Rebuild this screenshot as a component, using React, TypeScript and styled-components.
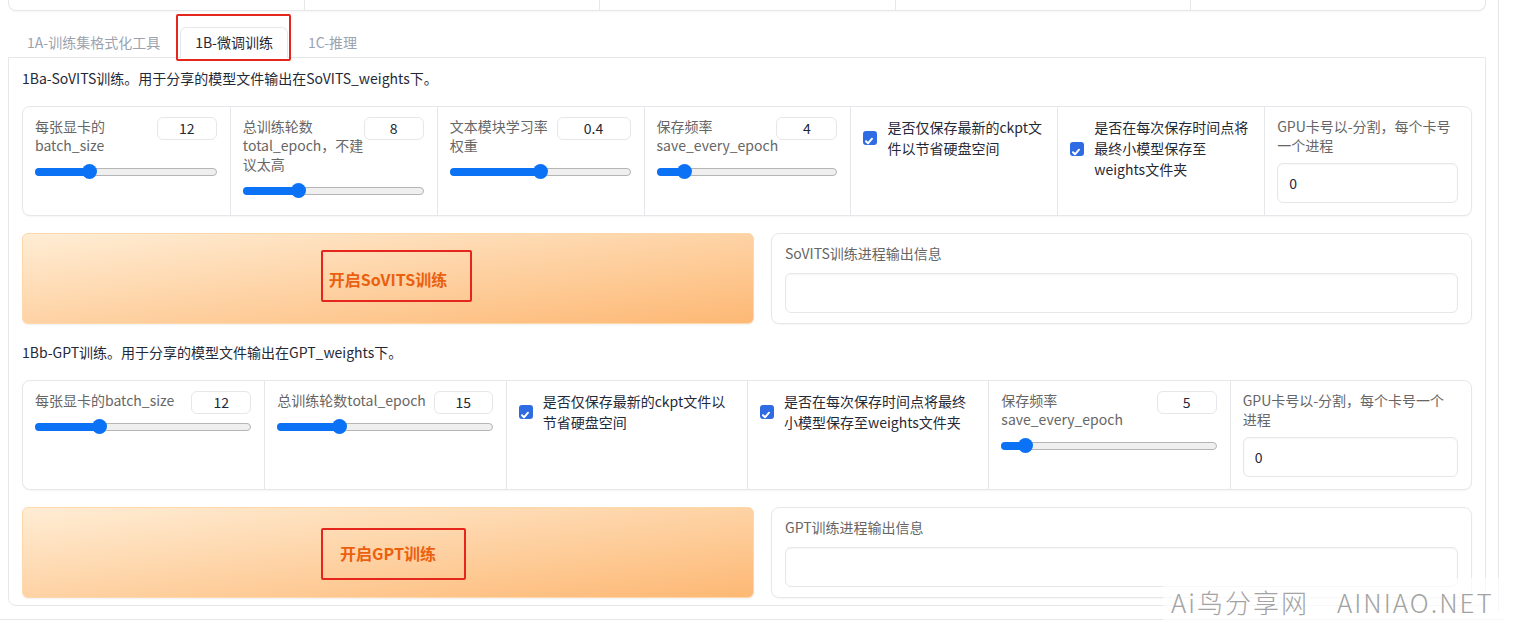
import React from 'react';
import styled, { createGlobalStyle, css } from 'styled-components';

const BORDER = '#e5e7eb';
const BLUE = '#0b72f6';

const GlobalStyle = createGlobalStyle`
  html, body {
    margin: 0;
    padding: 0;
    background: #fff;
  }
  body {
    font-family: "Noto Sans CJK SC", "Noto Sans", sans-serif;
    font-size: 14px;
    color: #1f2937;
  }
  * {
    box-sizing: border-box;
  }
`;

const Page = styled.div`
  position: relative;
  width: 1519px;
  height: 629px;
  overflow: hidden;
`;

const Frame = styled.div`
  width: 1499px;
  height: 611px;
  padding: 0 12px 0 8px;
  border-right: 1px solid ${BORDER};
  display: flex;
  flex-direction: column;
`;

const BottomRule = styled.div`
  width: 1505px;
  height: 1px;
  margin-top: 8px;
  background: ${BORDER};
`;

const TopStrip = styled.div`
  display: grid;
  grid-template-columns: repeat(5, 1fr);
  height: 11px;
  border: 1px solid ${BORDER};
  border-top: none;
  border-radius: 0 0 8px 8px;
  box-shadow: 0 1px 2px rgba(0, 0, 0, 0.04);
  overflow: hidden;
`;

const TopCell = styled.div`
  & + & {
    border-left: 1px solid ${BORDER};
  }
`;

const TabBar = styled.div`
  position: relative;
  z-index: 1;
  display: flex;
  gap: 5px;
  margin-top: 16px;
  padding-left: 4px;
`;

const Tab = styled.button<{ $active?: boolean }>`
  position: relative;
  height: 31px;
  margin-bottom: -1px;
  padding: 0 14px 3px;
  font: inherit;
  font-size: 14px;
  color: #9ca3af;
  background: transparent;
  border: 1px solid transparent;
  border-bottom: none;
  border-radius: 6px 6px 0 0;
  cursor: pointer;

  ${({ $active }) =>
    $active &&
    css`
      color: #1f2937;
      background: #fff;
      border-color: ${BORDER};
    `}
`;

const Annotation = styled.span<{ $t: number; $r: number; $b: number; $l: number }>`
  position: absolute;
  top: ${({ $t }) => $t}px;
  right: ${({ $r }) => $r}px;
  bottom: ${({ $b }) => $b}px;
  left: ${({ $l }) => $l}px;
  border: 2px solid #e4261d;
  border-radius: 2px;
  pointer-events: none;
`;

const Panel = styled.div`
  display: flex;
  flex-direction: column;
  gap: 17px;
  padding: 9px 13px 7px;
  border: 1px solid ${BORDER};
  border-radius: 0 0 8px 8px;
`;

const Description = styled.div`
  line-height: 22px;
  color: #1f2937;
`;

const ParamBlock = styled.div<{ $cols: number }>`
  display: grid;
  grid-template-columns: repeat(${({ $cols }) => $cols}, 1fr);
  border: 1px solid ${BORDER};
  border-radius: 8px;
  background: #fff;
  box-shadow: 0 1px 2px rgba(0, 0, 0, 0.04);
`;

const ParamCell = styled.div`
  min-width: 0;
  padding: 10px 13px 12px 12px;

  & + & {
    border-left: 1px solid ${BORDER};
  }
`;

const SliderHead = styled.div`
  display: flex;
  justify-content: space-between;
  align-items: flex-start;
  gap: 8px;
`;

const FieldLabel = styled.div`
  flex: 1;
  min-width: 0;
  margin-bottom: 8px;
  line-height: 19px;
  color: #666;

  span {
    display: block;
    white-space: nowrap;
  }
`;

const NumberBox = styled.div<{ $w: number }>`
  flex: none;
  width: ${({ $w }) => $w}px;
  height: 23px;
  line-height: 21px;
  text-align: center;
  color: #1f2937;
  border: 1px solid ${BORDER};
  border-radius: 6px;
  background: #fff;
`;

const Track = styled.div`
  position: relative;
  height: 15px;
  margin-top: 1px;
`;

const Rail = styled.div`
  position: absolute;
  left: 0;
  right: 0;
  top: 3.5px;
  height: 8px;
  border: 1px solid #b5b5b5;
  border-radius: 4px;
  background: #efefef;
`;

const Fill = styled.div`
  position: absolute;
  left: 0;
  top: 3.5px;
  height: 8px;
  border-radius: 4px;
  background: ${BLUE};
`;

const Thumb = styled.div`
  position: absolute;
  top: 0;
  width: 15px;
  height: 15px;
  border-radius: 50%;
  background: ${BLUE};
`;

const CheckRow = styled.label`
  display: flex;
  align-items: center;
  gap: 10px;
  line-height: 21px;
  color: #1f2937;

  span {
    display: block;
    white-space: nowrap;
  }
`;

const CheckBox = styled.span`
  flex: none;
  display: flex;
  align-items: center;
  justify-content: center;
  width: 14px;
  height: 14px;
  border-radius: 3px;
  background: #2f6be2;
`;

const TextField = styled.div`
  display: flex;
  align-items: center;
  height: 40px;
  margin-top: 2px;
  padding: 0 11px;
  color: #1f2937;
  border: 1px solid ${BORDER};
  border-radius: 6px;
  box-shadow: inset 0 1px 2px rgba(0, 0, 0, 0.03);
`;

const ActionRow = styled.div`
  display: grid;
  grid-template-columns: 732px 1fr;
  gap: 17px;
`;

const StartButton = styled.button`
  display: flex;
  align-items: center;
  justify-content: center;
  font: inherit;
  font-size: 16px;
  font-weight: 700;
  color: #ea600f;
  border: 1px solid #fed7aa;
  border-radius: 6px;
  background: linear-gradient(to bottom right, #ffedd5, #fdb874);
  box-shadow: 0 1px 2px rgba(0, 0, 0, 0.06);
  cursor: pointer;
`;

const ButtonText = styled.span`
  position: relative;
  line-height: 22px;
`;

const OutputBox = styled.div`
  padding: 9px 13px 10px;
  border: 1px solid ${BORDER};
  border-radius: 8px;
  box-shadow: 0 1px 2px rgba(0, 0, 0, 0.04);
`;

const OutputLabel = styled.div`
  line-height: 20px;
  color: #666;
`;

const OutputArea = styled.div`
  height: 40px;
  margin-top: 10px;
  border: 1px solid ${BORDER};
  border-radius: 6px;
  box-shadow: inset 0 1px 2px rgba(0, 0, 0, 0.04);
`;

const Watermark = styled.div`
  position: absolute;
  right: 0;
  top: 578px;
  width: 356px;
  height: 46px;
  padding-left: 8px;
  display: flex;
  align-items: center;
  gap: 28px;
  font-size: 26px;
  font-weight: 300;
  letter-spacing: 2px;
  color: #a3a3a3;
  background: rgba(255, 255, 255, 0.72);
  pointer-events: none;
`;

type Param =
  | { kind: 'slider'; label: string[]; value: number; min: number; max: number; w: number }
  | { kind: 'check'; label: string[] }
  | { kind: 'text'; label: string[]; value: string };

const Lines = ({ lines }: { lines: string[] }) => (
  <>
    {lines.map((l) => (
      <span key={l}>{l}</span>
    ))}
  </>
);

const Slider = ({ value, min, max }: { value: number; min: number; max: number }) => {
  const p = (value - min) / (max - min);
  return (
    <Track>
      <Rail />
      <Fill style={{ width: `calc(7.5px + (100% - 15px) * ${p})` }} />
      <Thumb style={{ left: `calc((100% - 15px) * ${p})` }} />
    </Track>
  );
};

const Check = () => (
  <CheckBox>
    <svg width="12" height="12" viewBox="0 0 12 12">
      <path
        d="M3 6.3l2 2 4-4.6"
        fill="none"
        stroke="#fff"
        strokeWidth="2"
        strokeLinecap="round"
        strokeLinejoin="round"
      />
    </svg>
  </CheckBox>
);

const ParamCellView = ({ param }: { param: Param }) => {
  if (param.kind === 'slider') {
    return (
      <ParamCell>
        <SliderHead>
          <FieldLabel>
            <Lines lines={param.label} />
          </FieldLabel>
          <NumberBox $w={param.w}>{param.value}</NumberBox>
        </SliderHead>
        <Slider value={param.value} min={param.min} max={param.max} />
      </ParamCell>
    );
  }
  if (param.kind === 'check') {
    return (
      <ParamCell>
        <CheckRow>
          <Check />
          <div>
            <Lines lines={param.label} />
          </div>
        </CheckRow>
      </ParamCell>
    );
  }
  return (
    <ParamCell>
      <FieldLabel>
        <Lines lines={param.label} />
      </FieldLabel>
      <TextField>{param.value}</TextField>
    </ParamCell>
  );
};

const sovitsParams: Param[] = [
  { kind: 'slider', label: ['每张显卡的', 'batch_size'], value: 12, min: 1, max: 40, w: 60 },
  { kind: 'slider', label: ['总训练轮数', 'total_epoch，不建', '议太高'], value: 8, min: 1, max: 25, w: 60 },
  { kind: 'slider', label: ['文本模块学习率', '权重'], value: 0.4, min: 0.2, max: 0.6, w: 74 },
  { kind: 'slider', label: ['保存频率', 'save_every_epoch'], value: 4, min: 1, max: 25, w: 61 },
  { kind: 'check', label: ['是否仅保存最新的ckpt文', '件以节省硬盘空间'] },
  { kind: 'check', label: ['是否在每次保存时间点将', '最终小模型保存至', 'weights文件夹'] },
  { kind: 'text', label: ['GPU卡号以-分割，每个卡号', '一个进程'], value: '0' },
];

const gptParams: Param[] = [
  { kind: 'slider', label: ['每张显卡的batch_size'], value: 12, min: 1, max: 40, w: 60 },
  { kind: 'slider', label: ['总训练轮数total_epoch'], value: 15, min: 2, max: 50, w: 59 },
  { kind: 'check', label: ['是否仅保存最新的ckpt文件以', '节省硬盘空间'] },
  { kind: 'check', label: ['是否在每次保存时间点将最终', '小模型保存至weights文件夹'] },
  { kind: 'slider', label: ['保存频率', 'save_every_epoch'], value: 5, min: 1, max: 50, w: 60 },
  { kind: 'text', label: ['GPU卡号以-分割，每个卡号一个', '进程'], value: '0' },
];

const App: React.FC = () => (
  <Page>
    <GlobalStyle />
    <Frame>
      <TopStrip>
        {[0, 1, 2, 3, 4].map((i) => (
          <TopCell key={i} />
        ))}
      </TopStrip>

      <TabBar>
        <Tab>1A-训练集格式化工具</Tab>
        <Tab $active>
          1B-微调训练
          <Annotation $t={-14} $r={-4} $b={-3} $l={-5} />
        </Tab>
        <Tab>1C-推理</Tab>
      </TabBar>

      <Panel>
        <Description>1Ba-SoVITS训练。用于分享的模型文件输出在SoVITS_weights下。</Description>
        <ParamBlock $cols={7}>
          {sovitsParams.map((p, i) => (
            <ParamCellView key={i} param={p} />
          ))}
        </ParamBlock>
        <ActionRow>
          <StartButton>
            <ButtonText>
              开启SoVITS训练
              <Annotation $t={-18} $r={-25} $b={-12} $l={-8} />
            </ButtonText>
          </StartButton>
          <OutputBox>
            <OutputLabel>SoVITS训练进程输出信息</OutputLabel>
            <OutputArea />
          </OutputBox>
        </ActionRow>

        <Description>1Bb-GPT训练。用于分享的模型文件输出在GPT_weights下。</Description>
        <ParamBlock $cols={6}>
          {gptParams.map((p, i) => (
            <ParamCellView key={i} param={p} />
          ))}
        </ParamBlock>
        <ActionRow>
          <StartButton>
            <ButtonText>
              开启GPT训练
              <Annotation $t={-14} $r={-30} $b={-16} $l={-19} />
            </ButtonText>
          </StartButton>
          <OutputBox>
            <OutputLabel>GPT训练进程输出信息</OutputLabel>
            <OutputArea />
          </OutputBox>
        </ActionRow>
      </Panel>
    </Frame>
    <BottomRule />

    <Watermark>
      <span>Ai鸟分享网</span>
      <span>AINIAO.NET</span>
    </Watermark>
  </Page>
);

export default App;
